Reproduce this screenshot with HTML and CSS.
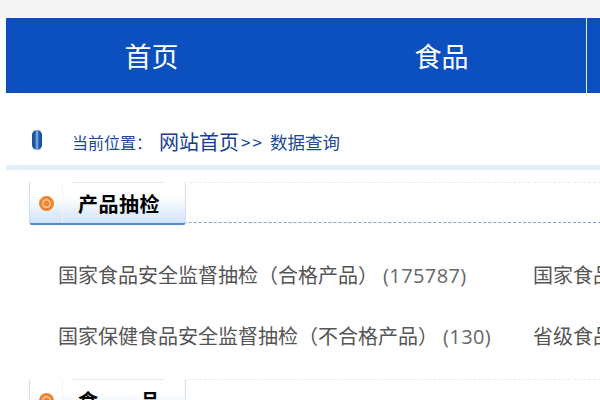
FILE: index.html
```html
<!DOCTYPE html>
<html lang="zh-CN">
<head>
    <meta charset="UTF-8">
    <meta name="viewport" content="width=device-width, initial-scale=1.0">
    <title>数据查询</title>
    <link rel="stylesheet" href="styles.css">
</head>
<body>
    <div class="page">
        <nav class="nav">
            <a class="nav-item nav-first">首页</a>
            <a class="nav-item">食品</a>
            <a class="nav-item"></a>
        </nav>

        <div class="crumb">
            <span class="crumb-pin"></span>
            <span class="crumb-label">当前位置：</span>
            <a class="crumb-home">网站首页</a>
            <span class="crumb-sep">&gt;&gt;</span>
            <span class="crumb-rest">数据查询</span>
        </div>

        <section class="block">
            <div class="block-head">
                <h2 class="tab">
                    <span class="tab-icon"><span class="dot"></span></span>
                    <span class="tab-text">产品抽检</span>
                </h2>
            </div>
            <ul class="links">
                <li>国家食品安全监督抽检（合格产品）<span class="num">(175787)</span></li>
                <li>国家食品安全监督抽检（不合格产品）<span class="num">(3012)</span></li>
                <li>国家保健食品安全监督抽检（不合格产品）<span class="num">(130)</span></li>
                <li>省级食品安全监督抽检（合格产品）<span class="num">(2086)</span></li>
            </ul>
        </section>

        <section class="block">
            <div class="block-head">
                <h2 class="tab">
                    <span class="tab-icon"><span class="dot"></span></span>
                    <span class="tab-text tab-text-wide">食品</span>
                </h2>
            </div>
        </section>
    </div>
</body>
</html>
```

FILE: styles.css
```css
* {
    box-sizing: border-box;
}

html, body {
    margin: 0;
    height: 400px;
    overflow: hidden;
    background: #fff;
    font-family: "Noto Sans CJK SC", "Noto Sans", sans-serif;
}

.page {
    width: 1200px;
    padding-top: 18px;
    background: linear-gradient(#f5f5f5 18px, #fff 18px);
}

.nav {
    display: flex;
    height: 75px;
    margin-left: 6px;
    background: #0b50be;
}

.nav-item {
    width: 290px;
    border-right: 1px solid #e8eef8;
    color: #fff;
    font-size: 27px;
    line-height: 75px;
    text-align: center;
}

.nav-first {
    width: 291px;
    border-right: 0;
}

.crumb {
    display: flex;
    align-items: center;
    height: 77px;
    margin-left: 6px;
    padding: 25px 0 0 26px;
    border-bottom: 5px solid #e3eff7;
    color: #1a4a94;
}

.crumb-pin {
    width: 10px;
    height: 20px;
    margin: 0 30px 3px 0;
    border-radius: 5px;
    background: linear-gradient(90deg, #1c4f96, #1f5aa8 30%, #8fb8e4 50%, #1f5aa8 70%, #1c4f96);
}

.crumb-label {
    margin: 1px 7px 0 0;
    font-size: 16px;
}

.crumb-home {
    font-size: 20px;
    color: #14408c;
}

.crumb-sep {
    margin: 0 6px 0 2px;
    font-size: 17px;
    letter-spacing: 2px;
}

.crumb-rest {
    font-size: 17.5px;
}

.block {
    padding-top: 12px;
}

.block-head {
    height: 41px;
    margin-left: 29px;
    border-top: 1px dashed #e8eef0;
    border-bottom: 1px dashed #7fa6d8;
}

.tab {
    display: flex;
    width: 157px;
    height: 43px;
    margin: -1px 0 0;
    border: 1px solid #cfe0ef;
    border-top-color: #fff;
    border-bottom: 2px solid #4f8cc8;
    border-radius: 3px;
    background: linear-gradient(#fff 35%, #cfe3f8);
}

.tab-icon {
    display: flex;
    align-items: center;
    justify-content: center;
    width: 33px;
    border-right: 1px solid #eef4fa;
}

.dot {
    width: 15px;
    height: 15px;
    border: 3px solid #ee8330;
    border-radius: 50%;
    background: radial-gradient(#ee8330 40%, #f8c79c 55%);
}

.tab-text {
    width: 91px;
    margin: -1px 0 0 10px;
    padding-left: 5px;
    border-top: 1px solid #dfe9f2;
    color: #000;
    font-size: 20px;
    font-weight: 700;
    letter-spacing: 0.5px;
    line-height: 42px;
    white-space: nowrap;
}

.tab-text-wide {
    letter-spacing: 42px;
}

.links {
    display: grid;
    grid-template-columns: repeat(2, 475px);
    grid-auto-rows: 61px;
    height: 144px;
    margin: 0;
    padding: 21px 0 0 58px;
    list-style: none;
    color: #555;
    font-size: 20px;
    line-height: 61px;
    white-space: nowrap;
}

.num {
    margin-left: 5px;
    color: #666;
    font-family: "Open Sans", sans-serif;
    font-size: 20px;
    letter-spacing: 0.4px;
}
```
